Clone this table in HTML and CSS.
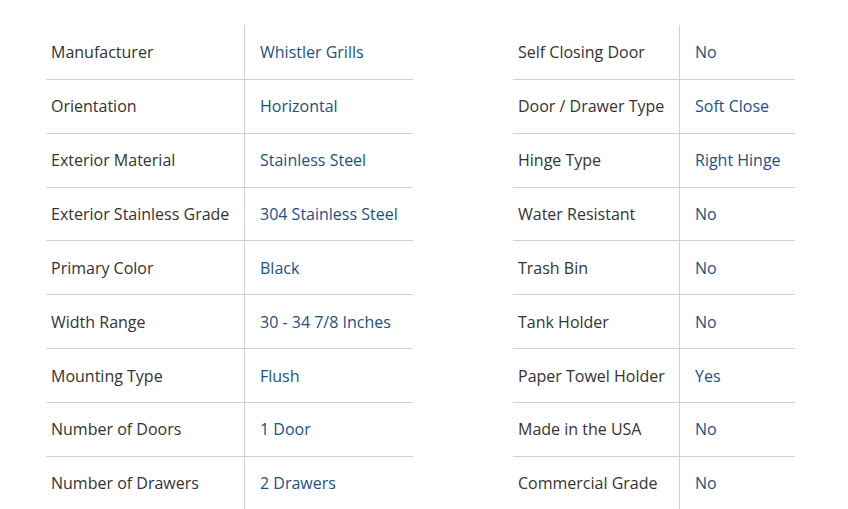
FILE: index.html
```html
<!DOCTYPE html>
<html>
<head>
<meta charset="utf-8">
<link rel="stylesheet" href="styles.css">
</head>
<body>
<div class="specs">
  <table class="spec spec-left">
    <tr><td class="k">Manufacturer</td><td class="v">Whistler Grills</td></tr>
    <tr><td class="k">Orientation</td><td class="v">Horizontal</td></tr>
    <tr><td class="k">Exterior Material</td><td class="v">Stainless Steel</td></tr>
    <tr><td class="k">Exterior Stainless Grade</td><td class="v">304 Stainless Steel</td></tr>
    <tr><td class="k">Primary Color</td><td class="v">Black</td></tr>
    <tr><td class="k">Width Range</td><td class="v">30 - 34 7/8 Inches</td></tr>
    <tr><td class="k">Mounting Type</td><td class="v">Flush</td></tr>
    <tr><td class="k">Number of Doors</td><td class="v">1 Door</td></tr>
    <tr><td class="k">Number of Drawers</td><td class="v">2 Drawers</td></tr>
  </table>
  <table class="spec spec-right">
    <tr><td class="k">Self Closing Door</td><td class="v">No</td></tr>
    <tr><td class="k">Door / Drawer Type</td><td class="v">Soft Close</td></tr>
    <tr><td class="k">Hinge Type</td><td class="v">Right Hinge</td></tr>
    <tr><td class="k">Water Resistant</td><td class="v">No</td></tr>
    <tr><td class="k">Trash Bin</td><td class="v">No</td></tr>
    <tr><td class="k">Tank Holder</td><td class="v">No</td></tr>
    <tr><td class="k">Paper Towel Holder</td><td class="v">Yes</td></tr>
    <tr><td class="k">Made in the USA</td><td class="v">No</td></tr>
    <tr><td class="k">Commercial Grade</td><td class="v">No</td></tr>
  </table>
</div>
</body>
</html>
```
FILE: styles.css
```css
html, body {
  margin: 0;
  padding: 0;
  background: #fff;
}
body {
  font-family: "Open Sans", "Liberation Sans", sans-serif;
  font-size: 16px;
}
.specs {
  display: flex;
  gap: 100px;
  padding: 25px 0 0 46px;
}
.spec {
  border-collapse: collapse;
  border-spacing: 0;
}
.spec td {
  height: 52.86px;
  padding: 0;
  border-bottom: 1px solid #d2d2d2;
  vertical-align: middle;
  line-height: 22px;
  white-space: nowrap;
}
.spec tr:first-child td {
  height: 53.86px;
}
.spec td.k {
  color: #333;
  padding-left: 5px;
  border-right: 1px solid #d2d2d2;
}
.spec td.v {
  color: #1d5086;
  padding-left: 15px;
}
.spec-left td.k { width: 193px; }
.spec-left td.v { width: 153px; }
.spec-right td.k { width: 161px; }
.spec-right td.v { width: 100px; }
```
